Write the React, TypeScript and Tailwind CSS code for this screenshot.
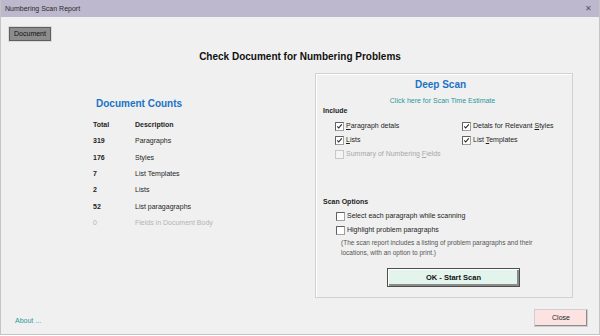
import React from 'react';

type Opt = { label: React.ReactNode; checked?: boolean; disabled?: boolean };

function CheckBox({ checked, disabled }: { checked?: boolean; disabled?: boolean }) {
  return (
    <svg width="9" height="9" viewBox="0 0 9 9" className="shrink-0">
      <rect x="0.5" y="0.5" width="8" height="8" fill={disabled ? '#f4f4f4' : '#ffffff'} stroke={disabled ? '#c8c8c8' : '#a0a0a0'} />
      <path d="M0.5 8.5V0.5H8.5" fill="none" stroke={disabled ? '#c8c8c8' : '#606060'} />
      {checked && <path d="M2.3 4.4L3.7 6L6.8 2.4" fill="none" stroke="#222" strokeWidth="1.1" />}
    </svg>
  );
}

function Check({ label, checked, disabled }: Opt) {
  return (
    <div className={`flex items-center gap-[2px] h-[14px] ${disabled ? 'text-[#a8a8a8]' : 'text-[#1e1e1e]'}`}>
      <CheckBox checked={checked} disabled={disabled} />
      <span>{label}</span>
    </div>
  );
}

export default function App() {
  const counts = [
    { n: '319', d: 'Paragraphs' },
    { n: '176', d: 'Styles' },
    { n: '7', d: 'List Templates' },
    { n: '2', d: 'Lists' },
    { n: '52', d: 'List paragagraphs' },
  ];

  return (
    <div className="w-[600px] h-[335px] bg-[#f0f0f0] flex flex-col border-x border-b border-[#c4c4c4] font-['Liberation_Sans',Arial,sans-serif] text-[7px] leading-[10px] text-[#1e1e1e] overflow-hidden">
      {/* title bar */}
      <div className="h-[17px] shrink-0 bg-[#bdb8cd] flex items-center justify-between pl-[4px] pr-[7px] text-[#2a2a2a]">
        <span>Numbering Scan Report</span>
        <span className="text-[8px] text-[#555]">✕</span>
      </div>

      <div className="pl-[8px] pt-[10px]">
        <div className="w-[42px] h-[14px] bg-[#8c8c8c] border border-[#5e5e5e] outline outline-[#dadada] flex items-center justify-center text-[#111]">
          Document
        </div>
      </div>

      <h1 className="mt-[10px] text-center text-[10px] leading-[12px] font-bold text-[#111]">
        Check Document for Numbering Problems
      </h1>

      <div className="flex mt-[10px]">
        {/* left: counts */}
        <div className="w-[314px] pl-[92px] pt-[25px]">
          <div className="ml-[3px] text-[10px] leading-[12px] font-bold text-[#1a73c6]">Document Counts</div>
          <div className="mt-[7px] grid grid-cols-[42px_1fr] auto-rows-[16.33px] items-center">
            <span className="font-bold">Total</span>
            <span className="font-bold">Description</span>
            {counts.map((c) => (
              <React.Fragment key={c.d}>
                <span className="font-bold">{c.n}</span>
                <span>{c.d}</span>
              </React.Fragment>
            ))}
            <span className="text-[#b4b4b4]">0</span>
            <span className="text-[#b4b4b4]">Fields in Document Body</span>
          </div>
        </div>

        {/* right: deep scan panel */}
        <div className="w-[258px] h-[225px] border border-[#d2d2d2] shadow-[inset_1px_1px_0_#ffffff] flex flex-col">
          <div className="mt-[5px] text-center pr-[7px] text-[10px] leading-[12px] font-bold text-[#1a73c6]">Deep Scan</div>
          <div className="mt-[5px] text-center pr-[3px] text-[#2b9a9a]">Click here for Scan Time Estimate</div>
          <div className="ml-[7px] font-bold">Include</div>
          <div className="mt-[3px] grid grid-cols-[127px_1fr] pl-[19px]">
            <div>
              <Check checked label={<><u>P</u>aragraph detals</>} />
              <Check checked label={<><u>L</u>ists</>} />
              <Check disabled label={<>Summary of Numbering <u>F</u>ields</>} />
            </div>
            <div>
              <Check checked label={<>Detals for Relevant <u>S</u>tyles</>} />
              <Check checked label={<>List <u>T</u>emplates</>} />
            </div>
          </div>
          <div className="mt-[36px] ml-[7px] font-bold">Scan Options</div>
          <div className="mt-[2px] pl-[20px]">
            <Check label="Select each paragraph while scanning" />
            <Check label="Highlight problem paragraphs" />
          </div>
          <div className="mt-[1px] pl-[25px] text-[6.5px] text-[#555]">
            (The scan report includes a listing of problem paragraphs and their
            <br />
            locations, with an option to print.)
          </div>
          <div className="mt-[10px] ml-[71px] w-[133px] h-[19px] bg-[#e2f4ec] border border-[#4e4e4e] shadow-[inset_1px_1px_0_#ffffff,inset_-2px_-2px_0_#8a8a8a] flex items-center justify-center font-bold text-[7.5px] text-[#111]">
            OK - Start Scan
          </div>
        </div>
      </div>

      {/* footer */}
      <div className="mt-[11px] flex items-end justify-between pl-[14px] pr-[11px]">
        <span className="mb-[1px] text-[#2b9a9a]">About ...</span>
        <div className="w-[54px] h-[18px] bg-[#fde2e2] border border-[#cfcfcf] shadow-[inset_-1px_-1px_0_#8c8c8c] flex items-center justify-center text-[#222]">
          Close
        </div>
      </div>
    </div>
  );
}
